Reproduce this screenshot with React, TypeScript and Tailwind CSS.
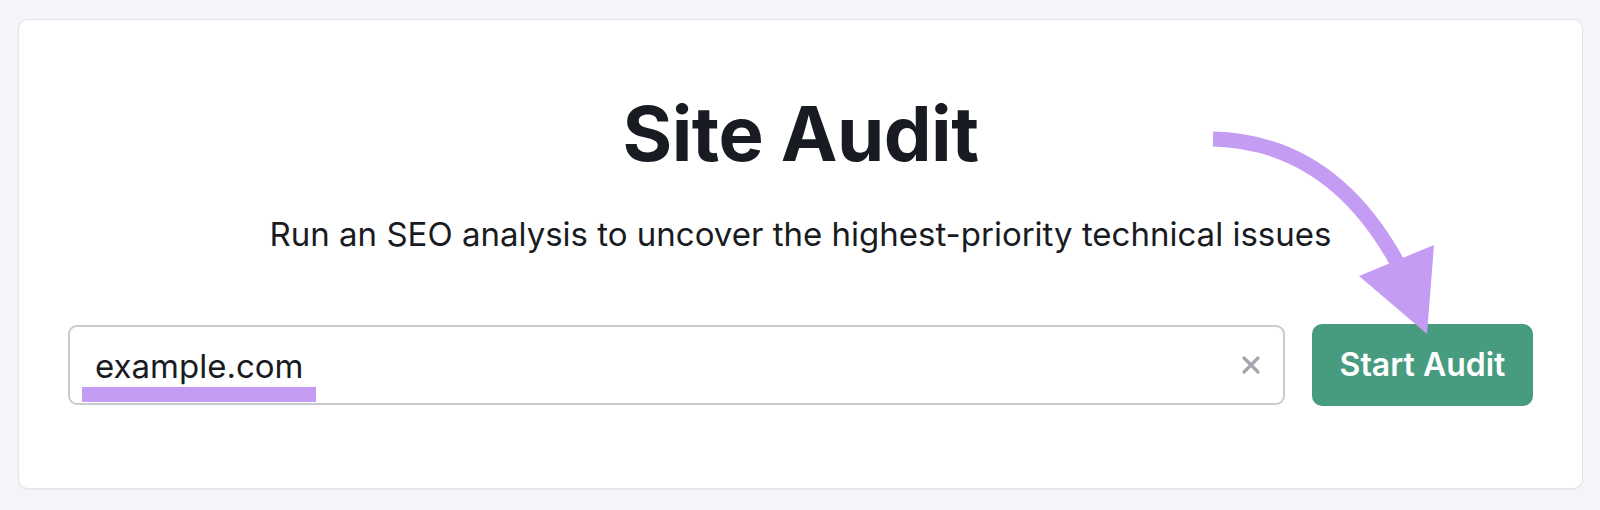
import React from "react";

const font = { fontFamily: "Inter, 'Noto Sans', sans-serif" };

function ClearIcon() {
  return (
    <svg width="20" height="20" viewBox="0 0 20 20" fill="none">
      <path d="M3 3L17 17M17 3L3 17" stroke="#a4a6ac" strokeWidth="3.2" strokeLinecap="round" />
    </svg>
  );
}

export default function App() {
  return (
    <div className="h-[510px] w-full bg-[#f4f5f9] pl-[18px] pt-[19px]" style={font}>
      <div className="relative flex h-[470px] w-[1565px] flex-col items-center rounded-[10px] border border-[#e3e4ea] bg-white pt-[75px] shadow-[0_1px_2px_rgba(0,0,0,0.04)]">
        <h1 className="text-[76px] font-bold leading-none tracking-[-0.5px] text-[#191b23]">Site Audit</h1>
        <p className="mt-[47px] text-[33px] leading-none text-[#191b23]">
          Run an SEO analysis to uncover the highest-priority technical issues
        </p>

        <div className="mt-[73px] flex w-full items-center gap-[27px] px-[49px]">
          <div className="relative flex h-[80px] flex-1 items-center justify-between rounded-[9px] border-2 border-[#c9cbd1] pl-[25px] pr-[22px]">
            <span className="pt-[2px] text-[33px] leading-none text-[#191b23]">example.com</span>
            <ClearIcon />
            <div className="absolute left-[12px] top-[60px] h-[15px] w-[234px] bg-[#c59cf3]" />
          </div>
          <button className="h-[82px] w-[221px] rounded-[10px] bg-[#479c80] text-[32px] font-semibold text-white">
            Start Audit
          </button>
        </div>

        <svg className="pointer-events-none absolute inset-0 z-10" width="1563" height="468">
          <g transform="translate(-19,-20)">
            <path d="M1213 139 C1295 141 1355 185 1398 264" stroke="#c59cf3" strokeWidth="15" fill="none" />
            <polygon points="1359,276 1434,245 1427,334" fill="#c59cf3" />
          </g>
        </svg>
      </div>
    </div>
  );
}
